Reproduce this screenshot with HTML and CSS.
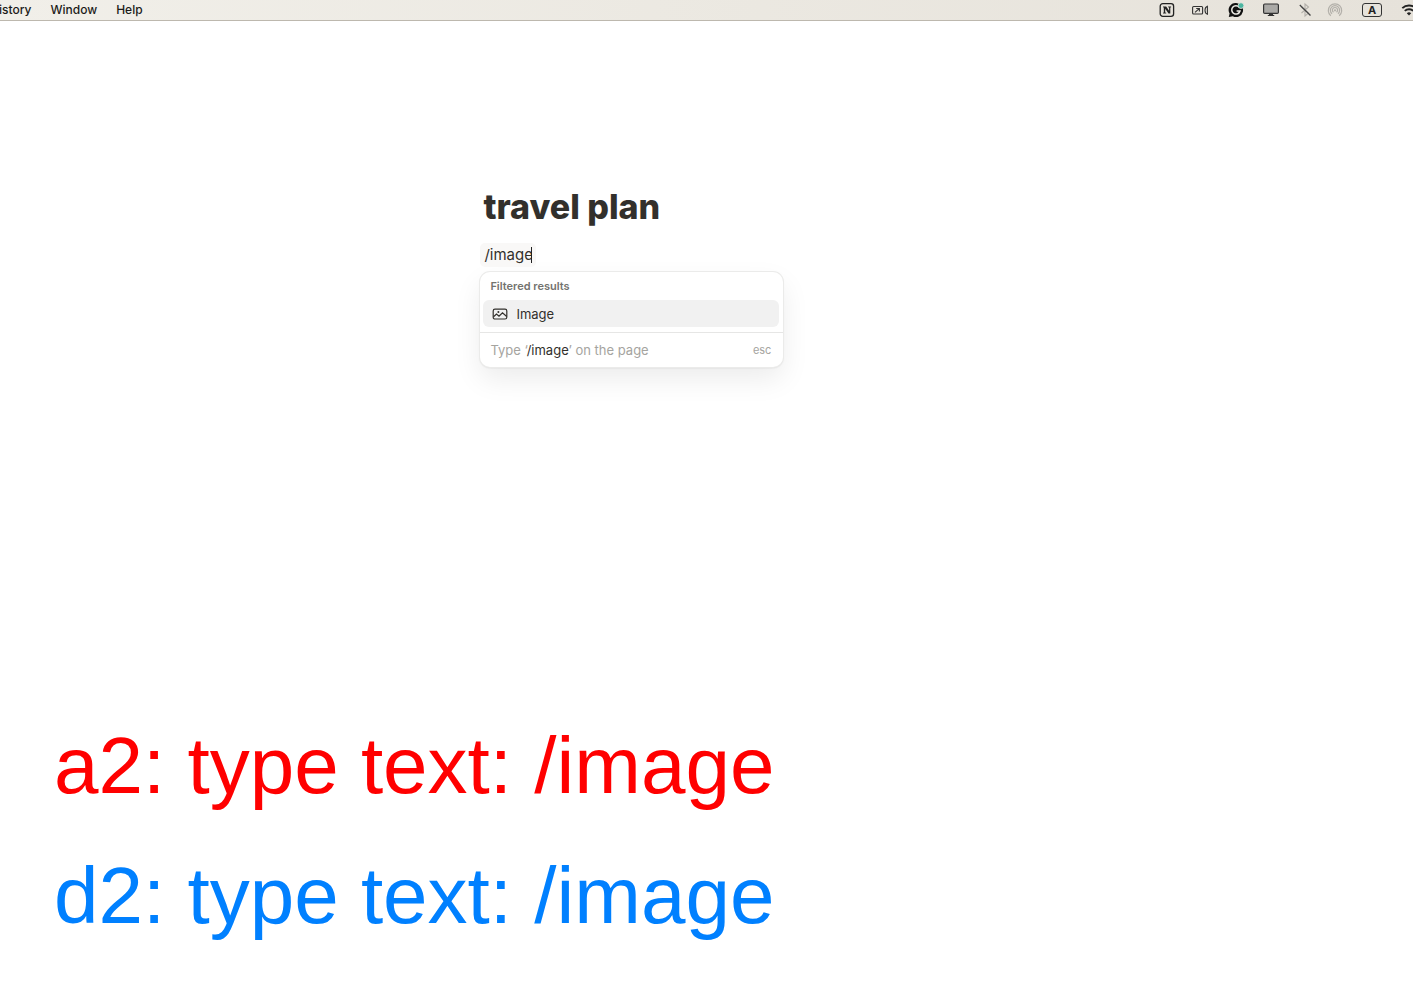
FILE: index.html
```
<!DOCTYPE html>
<html lang="en">
<head>
<meta charset="utf-8">
<title>travel plan</title>
<link rel="stylesheet" href="styles.css">
</head>
<body>
<header class="menubar">
  <nav class="menus" aria-label="Menu bar">
    <button class="menu history" type="button">istory</button>
    <button class="menu" type="button">Window</button>
    <button class="menu" type="button">Help</button>
  </nav>
  <div class="status">
    <button class="tray" type="button" aria-label="Notion"><svg width="16" height="16" viewBox="0 0 16 16"><rect x="1.2" y="1.7" width="13.4" height="12.6" rx="2.6" fill="none" stroke="#222" stroke-width="1.3"/><path d="M4 4.500h3.200l2.900 4.300V5.600l-1-.3v-.8h3v.8l-.8.3v6H9.500L6.200 6.800v3.600l1 .3v.8H4v-.8l.8-.3V5.600L4 5.300z" fill="#222"/></svg></button>
    <button class="tray" type="button" aria-label="Screen recorder"><svg width="16" height="16" viewBox="0 0 16 16"><g fill="none" stroke="#333" stroke-width="1.100"><rect x=".6" y="4.500" width="10" height="7.500" rx="1"/><path d="M3 10.400l4.200-3.800M4.200 6.500h3.200v3M15.400 4.200c-1.700.6-2.400 2-2.400 4s.7 3.400 2.400 4z"/></g></svg></button>
    <button class="tray grammarly" type="button" aria-label="Grammarly"><svg width="16" height="16" viewBox="0 0 16 16"><path d="M8 1a7 7 0 1 1-3.200 13.200L.8 15l.8-3.500A7 7 0 0 1 8 1z" fill="#111"/><path d="M11.200 5.200A4.200 4.200 0 1 0 12 9H8.600M12 9l-1.500 3" fill="none" stroke="#eceae4" stroke-width="1.500"/><circle cx="13" cy="3.600" r="2.900" fill="#4cb5a0" stroke="#e8e5df" stroke-width=".8"/></svg></button>
    <button class="tray" type="button" aria-label="Display"><svg width="18" height="16" viewBox="0 0 18 16"><rect x="1.600" y="2" width="14.800" height="9.400" rx="1.200" fill="#aaa9a6" stroke="#333" stroke-width="1.200"/><path d="M7.200 11.500h3.600l.4 1.600h1v.9H5.800v-.9h1z" fill="#333"/></svg></button>
    <button class="tray" type="button" aria-label="Bluetooth off"><svg width="16" height="16" viewBox="0 0 16 16"><path d="M4.500 5l7 6L8 14V2l3.500 3-7 6" fill="none" stroke="#b3b0aa" stroke-width="1.100"/><path d="M2.800 3l10.700 10.500" stroke="#444" stroke-width="1.300"/></svg></button>
    <button class="tray airdrop" type="button" aria-label="AirDrop"><svg width="16" height="16" viewBox="0 0 16 16"><g fill="none" stroke="#b3b0aa" stroke-width="1.200"><path d="M3.800 13.700a6.700 6.700 0 1 1 8.400 0M5 11.800a4.600 4.600 0 1 1 6 0M6.500 10.200a2.600 2.600 0 1 1 3 0"/></g><circle cx="8" cy="8.300" r="1.100" fill="#b3b0aa"/></svg></button>
    <button class="tray input-source" type="button">A</button>
    <button class="tray wifi" type="button" aria-label="Wi-Fi"><svg width="16" height="16" viewBox="0 0 16 16"><g fill="none" stroke="#222" stroke-width="1.900"><path d="M1.300 6.200a9.500 9.500 0 0 1 13.400 0M3.800 8.900a6 6 0 0 1 8.400 0"/></g><path d="M5.800 11.200a3.200 3.200 0 0 1 4.400 0L8 13.600z" fill="#222"/></svg></button>
  </div>
</header>
<main class="page">
  <article class="document">
    <h1 class="title">travel plan</h1>
    <div class="command">
      <input class="command-input" type="text" value="/image" aria-label="Slash command" spellcheck="false">
      <span class="caret"></span>
    </div>
    <section class="popup" aria-label="Commands">
      <h2 class="popup-heading">Filtered results</h2>
      <button class="result" type="button">
        <svg width="16" height="16" viewBox="0 0 16 16"><g fill="none" stroke="#32302c" stroke-width="1.200"><rect x="1.200" y="3.200" width="13.600" height="9.800" rx="1.800"/><path d="M1.500 10.700l3-2.700 2.500 2.200 3.500-3.400 4.200 3.700"/></g><circle cx="6.400" cy="6" r="1" fill="#32302c"/></svg>
        <span>Image</span>
      </button>
      <footer class="popup-footer">
        <span>Type ‘<span class="typed">/image</span>’ on the page</span>
        <span class="key">esc</span>
      </footer>
    </section>
  </article>
  <section class="captions">
    <p class="caption action">a2: type text: /image</p>
    <p class="caption description">d2: type text: /image</p>
  </section>
</main>
</body>
</html>
```
FILE: styles.css
```
* { box-sizing: border-box; }
body {
  margin: 0;
  min-height: 100vh;
  display: flex;
  flex-direction: column;
  background: #fff;
  color: #32302c;
  font-family: Inter, "Liberation Sans", sans-serif;
  overflow-x: hidden;
}
button { border: 0; padding: 0; background: none; color: inherit; font: inherit; }
svg { display: block; }
.menubar {
  display: flex;
  justify-content: space-between;
  align-items: center;
  height: 21px;
  border-bottom: 1px solid #bdb8ae;
  background: linear-gradient(90deg, #f1efe9, #e6e2da);
  overflow: hidden;
}
.menus { display: flex; gap: 19px; margin-left: -1px; }
.menu { font-size: 12px; line-height: 20px; font-weight: 500; color: #1c1b19; }
.status { display: flex; align-items: center; gap: 17px; margin-right: -4px; }
.grammarly { margin: 0 1px 0 3px; }
.airdrop { margin: 0 2px 0 -3px; }
.input-source {
  width: 20px;
  height: 14px;
  margin-right: 2px;
  border: 1px solid #333;
  border-radius: 3px;
  font-size: 11px;
  line-height: 12px;
  font-weight: 700;
  color: #222;
}
.page { flex: 1; display: flex; flex-direction: column; justify-content: space-between; }
.document { width: 303px; margin: 162px 0 0 34%; }
.title { margin: 0; padding-left: 3px; font-size: 34px; line-height: 48px; font-weight: 800; white-space: nowrap; }
.command {
  display: inline-flex;
  align-items: center;
  height: 24px;
  margin-top: 12px;
  padding: 0 4px;
  border-radius: 5px;
  background: #f9f8f7;
}
.command-input {
  width: 47px;
  padding: 0;
  border: 0;
  outline: 0;
  background: none;
  color: inherit;
  font: 15px/24px Inter, "Liberation Sans", sans-serif;
}
.caret { width: 1px; height: 16px; background: #222; }
.popup {
  margin-top: 5px;
  border-radius: 10px;
  background: #fff;
  box-shadow: 0 0 0 1px #ebebea, 0 1px 2px #0002, 0 12px 28px #00000014;
}
.popup-heading { margin: 0; padding: 0 10px; font-size: 11px; line-height: 28px; font-weight: 600; color: #73726e; }
.result {
  display: flex;
  align-items: center;
  gap: 8px;
  width: calc(100% - 7px);
  height: 27px;
  margin: 0 4px 5px 3px;
  padding: 0 9px;
  border-radius: 6px;
  background: #f1f1f1;
  font-size: 13px;
}
.popup-footer {
  display: flex;
  justify-content: space-between;
  border-top: 1px solid #e6e6e5;
  padding: 0 12px 0 10px;
  font-size: 13px;
  line-height: 34px;
  color: #a5a4a0;
}
.typed { color: #32302c; }
.key { font-size: 11px; }
.captions { padding: 0 54px 49px; font-family: "Liberation Sans", Arial, sans-serif; }
.caption { margin: 0; font-size: 80px; line-height: 90px; }
.caption + .caption { margin-top: 40px; }
.action { color: #f00; }
.description { color: #0080ff; }
```
